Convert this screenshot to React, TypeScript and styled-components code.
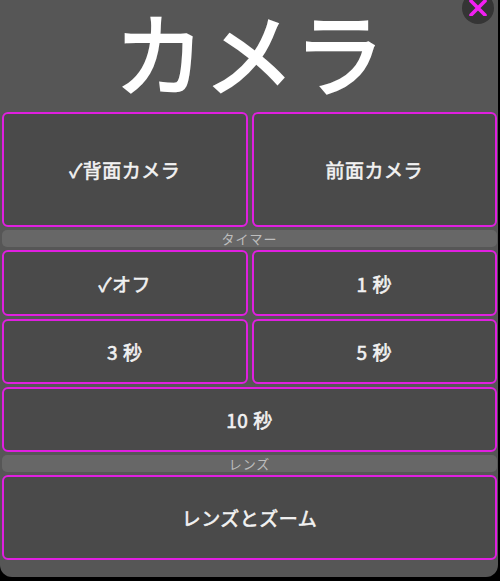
import React from "react";
import styled, { createGlobalStyle } from "styled-components";

const GlobalStyle = createGlobalStyle`
  html, body {
    margin: 0;
    padding: 0;
    background: #000;
  }
  body {
    font-family: "Noto Sans CJK JP", "Noto Sans", sans-serif;
  }
`;

const Panel = styled.div`
  position: relative;
  width: 498px;
  height: 577px;
  box-sizing: border-box;
  padding: 0 1px 0 2px;
  background-color: #565656;
  border-radius: 0 0 12px 12px;
  overflow: hidden;
`;

const Title = styled.h1`
  margin: -15px 0 -3px;
  padding: 0;
  text-align: center;
  font-size: 90px;
  font-weight: 400;
  line-height: normal;
  color: #ffffff;
  -webkit-text-stroke: 2.4px #ffffff;
`;

const CloseButton = styled.button`
  position: absolute;
  top: -8px;
  right: 4px;
  z-index: 1;
  width: 32px;
  height: 32px;
  border: none;
  border-radius: 50%;
  background-color: #353535;
  padding: 0 0 8px;
  display: flex;
  align-items: flex-end;
  justify-content: center;
  box-sizing: border-box;
  cursor: pointer;
`;

const Grid = styled.div`
  display: grid;
  grid-template-columns: 1fr 1fr;
  column-gap: 4px;
  row-gap: 3px;
`;

const Option = styled.button<{ $h: number; $wide?: boolean }>`
  grid-column: ${({ $wide }) => ($wide ? "1 / span 2" : "auto")};
  height: ${({ $h }) => $h}px;
  box-sizing: border-box;
  border: 2px solid #e01fe0;
  border-radius: 6px;
  background-color: #4a4a4a;
  color: #f2f2f2;
  font-family: "Noto Sans CJK JP", "Noto Sans", sans-serif;
  font-size: 19px;
  font-weight: 400;
  -webkit-text-stroke: 0.6px #f2f2f2;
  letter-spacing: 0.5px;
  display: flex;
  align-items: center;
  justify-content: center;
  padding: 0;
  cursor: pointer;
`;

const SectionLabel = styled.div`
  grid-column: 1 / span 2;
  height: 17px;
  border-radius: 5px;
  background-color: #676767;
  color: #bdbdbd;
  font-size: 13px;
  line-height: 17px;
  text-align: center;
  letter-spacing: 1px;
`;

const CloseIcon = () => (
  <svg width="18" height="16" viewBox="0 0 18 16">
    <path
      d="M2 1 L16 15 M16 1 L2 15"
      stroke="#f21ff2"
      strokeWidth="3.6"
      strokeLinecap="round"
    />
  </svg>
);

const App: React.FC = () => {
  return (
    <>
      <GlobalStyle />
      <Panel>
        <Title>カメラ</Title>
        <CloseButton aria-label="閉じる">
          <CloseIcon />
        </CloseButton>
        <Grid>
          <Option $h={115}>✓背面カメラ</Option>
          <Option $h={115}>前面カメラ</Option>
          <SectionLabel>タイマー</SectionLabel>
          <Option $h={66}>✓オフ</Option>
          <Option $h={66}>1 秒</Option>
          <Option $h={65}>3 秒</Option>
          <Option $h={65}>5 秒</Option>
          <Option $h={65} $wide>
            10 秒
          </Option>
          <SectionLabel>レンズ</SectionLabel>
          <Option $h={85} $wide>
            レンズとズーム
          </Option>
        </Grid>
      </Panel>
    </>
  );
};

export default App;
